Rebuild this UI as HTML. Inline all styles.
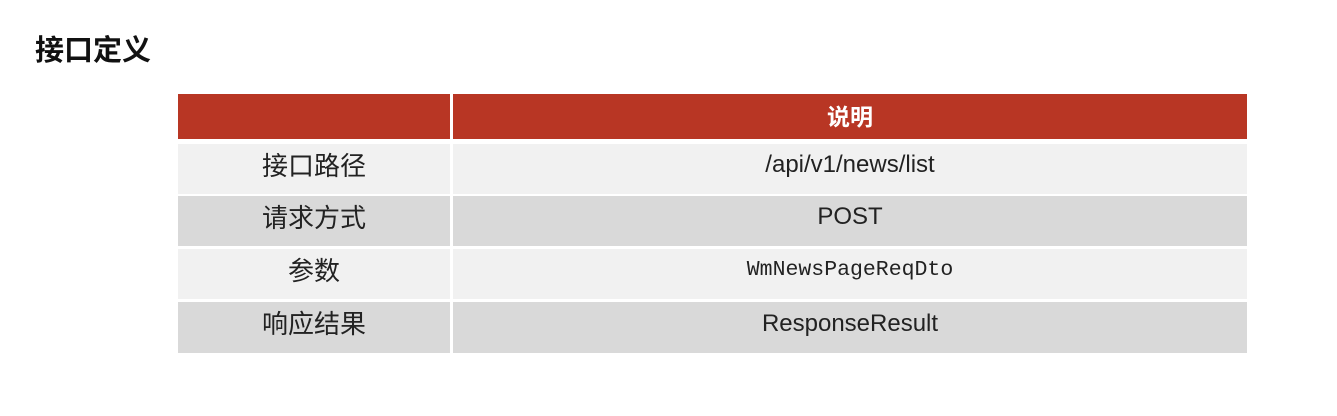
<!DOCTYPE html>
<html><head><meta charset="utf-8"><style>
body{margin:0;width:1337px;height:416px;background:#fff;font-family:"Liberation Sans","Noto Sans CJK SC",sans-serif;position:relative;overflow:hidden}
h1{position:absolute;left:35px;top:28px;margin:0;font-size:29px;line-height:40px;font-weight:bold;color:#111;font-family:"Noto Sans CJK SC",sans-serif}
.c{position:absolute;box-sizing:border-box;padding-bottom:8px;display:flex;align-items:center;justify-content:center;font-size:24px;color:#222;font-family:"Liberation Sans","Noto Sans CJK SC",sans-serif}
.z{font-size:26px;font-family:"Noto Sans CJK SC",sans-serif;padding-bottom:10px}
.h{background:#b83624;color:#fff;font-weight:bold;font-size:23px;padding-bottom:4px}
.a{background:#f1f1f1}.b{background:#d9d9d9}
.m{font-family:"Liberation Mono",monospace;font-size:21.5px}
</style></head><body>
<h1>接口定义</h1>
<div class="c h" style="left:178px;top:94px;width:272px;height:45px"></div>
<div class="c h" style="left:453px;top:94px;width:794px;height:45px;font-family:'Noto Sans CJK SC',sans-serif">说明</div>
<div class="c a z" style="left:178px;top:144px;width:272px;height:50px">接口路径</div>
<div class="c a" style="left:453px;top:144px;width:794px;height:50px">/api/v1/news/list</div>
<div class="c b z" style="left:178px;top:196px;width:272px;height:50px">请求方式</div>
<div class="c b" style="left:453px;top:196px;width:794px;height:50px">POST</div>
<div class="c a z" style="left:178px;top:249px;width:272px;height:50px">参数</div>
<div class="c a m" style="left:453px;top:249px;width:794px;height:50px">WmNewsPageReqDto</div>
<div class="c b z" style="left:178px;top:302px;width:272px;height:51px">响应结果</div>
<div class="c b" style="left:453px;top:302px;width:794px;height:51px">ResponseResult</div>
</body></html>
